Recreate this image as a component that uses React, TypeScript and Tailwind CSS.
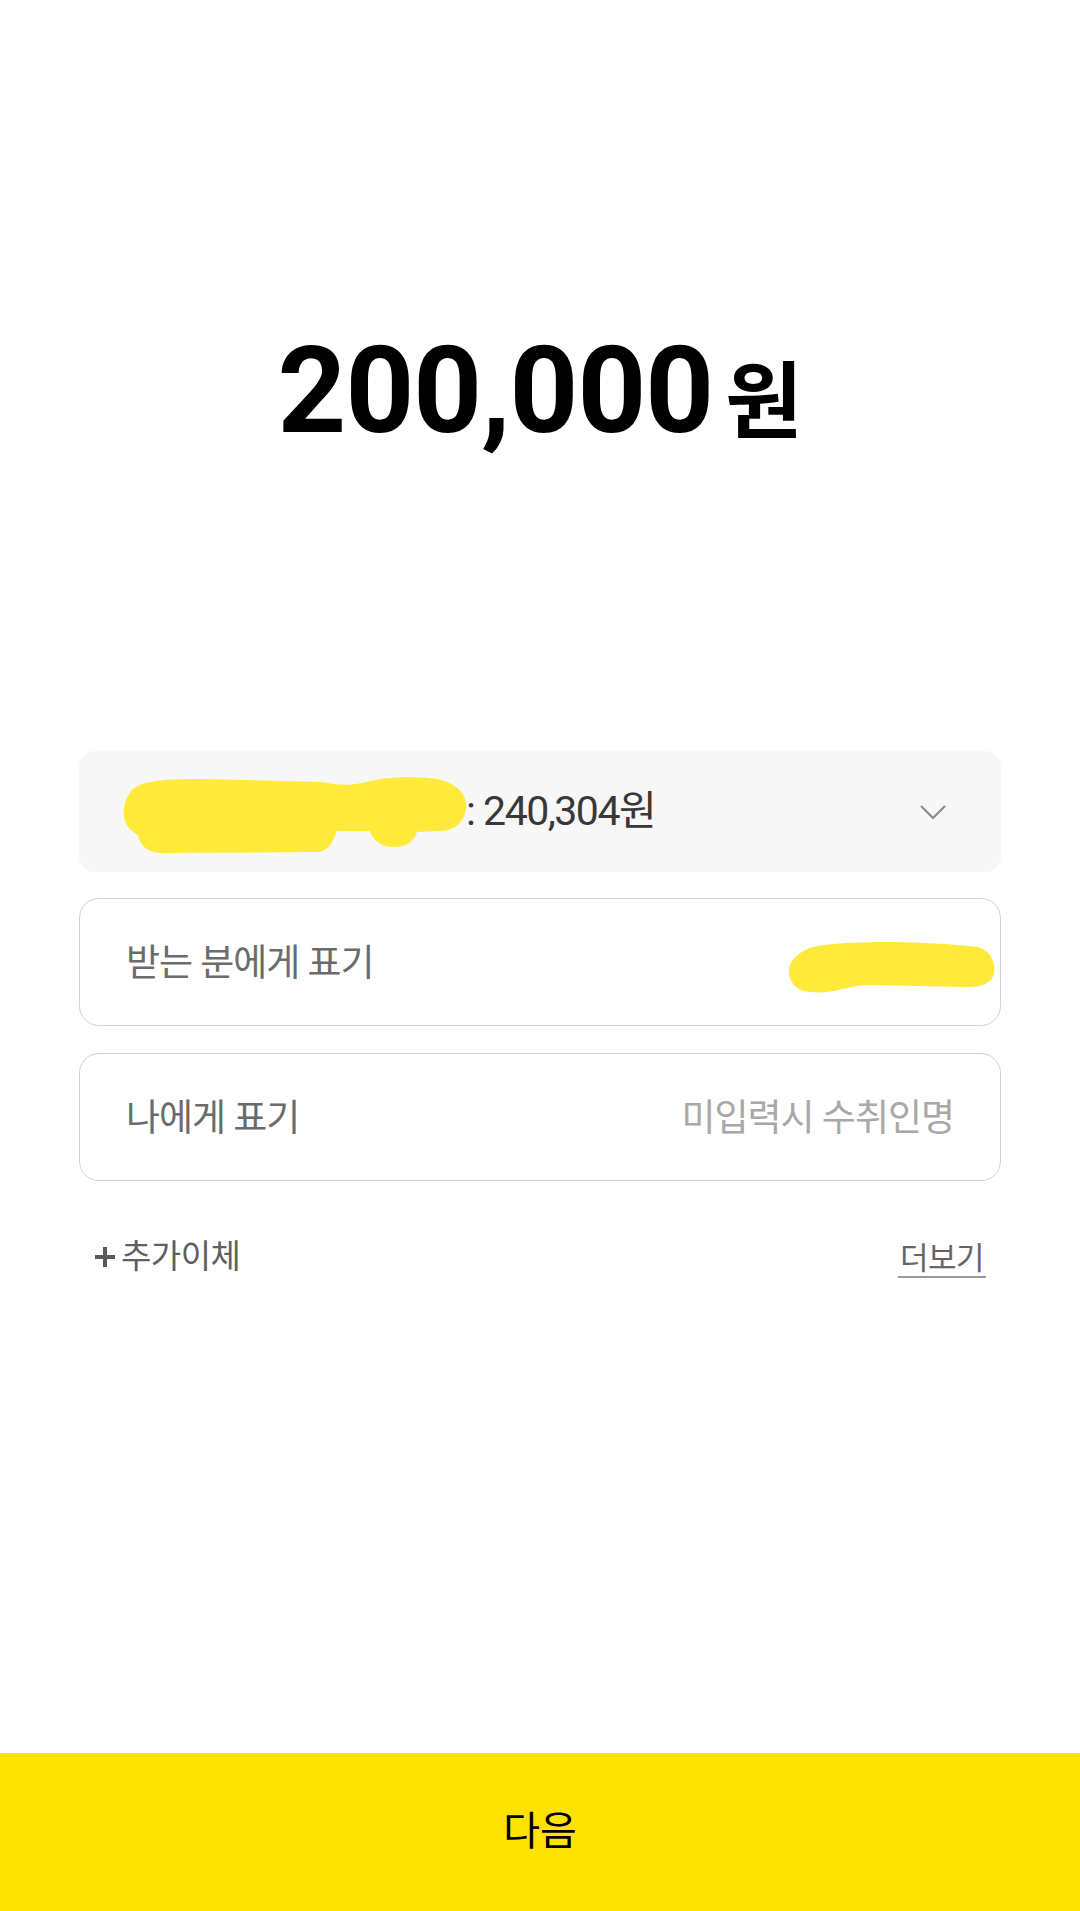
export default function App() {
  return (
    <div className="h-[1911px] w-full bg-white flex flex-col font-['Roboto','Noto_Sans_CJK_KR',sans-serif]">
      {/* Amount */}
      <div className="pt-[331px] flex justify-center items-baseline">
        <span className="text-[120px] font-bold leading-none tracking-[-1px] text-black">200,000</span>
        <span className="ml-[12px] text-[84px] font-bold leading-none text-black font-['Noto_Sans_CJK_KR',sans-serif]">
          원
        </span>
      </div>

      {/* Account select */}
      <div className="mx-[79px] mt-[300px] h-[121px] rounded-[16px] bg-[#f7f7f7] flex items-center justify-between pl-[43px] pr-[54px]">
        <div className="flex items-center">
          <svg className="mt-[5px]" width="348" height="82" viewBox="0 0 348 82">
            <path
              d="M8,20 C14,8 40,6 80,6 L200,9 C215,12 225,13 240,10 C260,4 290,2 315,6 C335,10 346,22 344,36 C342,50 332,58 318,58 L295,59 C292,68 285,74 272,74 C258,74 250,66 248,58 L215,58 C212,66 208,78 195,79 L40,80 C25,80 18,72 16,62 C4,56 0,45 2,34 C3,28 5,24 8,20 Z"
              fill="#ffea3b"
            />
          </svg>
          <span className="ml-[-4px] text-[41px] font-normal tracking-[-1.5px] text-[#383838]">: 240,304원</span>
        </div>
        <svg width="28" height="16" viewBox="0 0 28 16">
          <path d="M2,2 L14,14 L26,2" fill="none" stroke="#8a8a8a" strokeWidth="2.2" />
        </svg>
      </div>

      {/* Memo for receiver */}
      <div className="mx-[79px] mt-[26px] h-[128px] rounded-[20px] border-[1.5px] border-[#d2d2d2] flex items-center justify-between pl-[46px] pr-[4px]">
        <span className="mt-[4px] text-[37px] tracking-[-1px] text-[#6b6b6b]">받는 분에게 표기</span>
        <svg className="mt-[10px]" width="208" height="52" viewBox="0 0 208 52">
          <path
            d="M10,14 C20,4 40,2 90,1 C130,1 165,3 190,6 C203,10 208,22 206,32 C204,42 195,46 180,46 L80,44 C70,44 60,47 50,49 C40,52 25,52 15,50 C5,46 0,38 1,28 C2,22 5,18 10,14 Z"
            fill="#ffea3b"
          />
        </svg>
      </div>

      {/* Memo for me */}
      <div className="mx-[79px] mt-[27px] h-[128px] rounded-[20px] border-[1.5px] border-[#d2d2d2] flex items-center justify-between px-[46px]">
        <span className="mt-[4px] text-[37px] tracking-[-1px] text-[#6b6b6b]">나에게 표기</span>
        <span className="mt-[4px] text-[37px] tracking-[-1px] text-[#a8a8a8]">미입력시 수취인명</span>
      </div>

      {/* Extra actions */}
      <div className="mx-[79px] mt-[56px] px-[15px] h-[40px] flex items-center justify-between">
        <div className="flex items-center gap-[5px]">
          <svg width="22" height="22" viewBox="0 0 22 22">
            <path d="M11,1 V21 M1,11 H21" stroke="#5a5a5a" strokeWidth="4" />
          </svg>
          <span className="text-[33px] tracking-[-0.5px] text-[#5f5f5f]">추가이체</span>
        </div>
        <span className="mt-[6px] px-[2px] pb-[1px] leading-[32px] text-[31px] tracking-[-0.5px] text-[#666666] border-b-2 border-[#9a9a9a]">
          더보기
        </span>
      </div>

      <div className="flex-1" />

      {/* Next button */}
      <div className="h-[158px] bg-[#ffe300] flex items-center justify-center">
        <span className="text-[40px] text-black">다음</span>
      </div>
    </div>
  );
}
